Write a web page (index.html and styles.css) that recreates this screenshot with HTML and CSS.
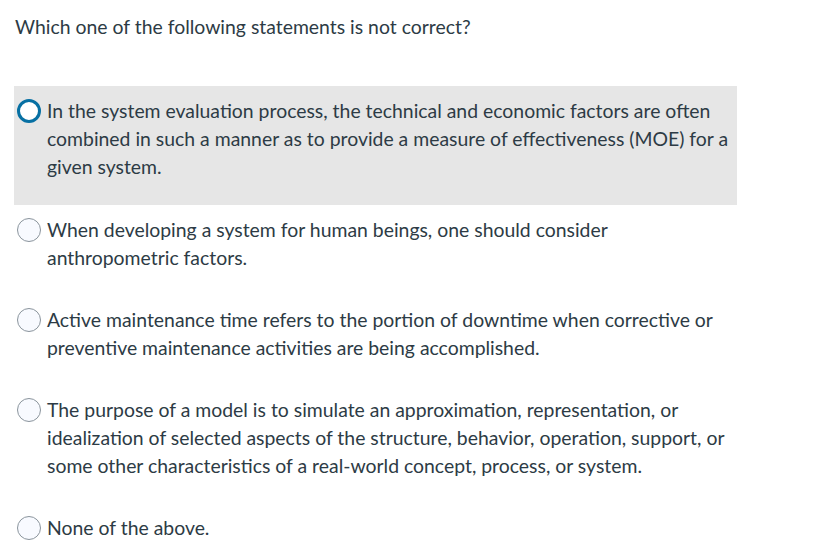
FILE: index.html
```html
<!DOCTYPE html>
<html>
<head>
<meta charset="utf-8">
<link rel="stylesheet" href="styles.css">
</head>
<body>
<div class="question">
  <p class="prompt">Which one of the following statements is not correct?</p>
  <div class="answers">
    <label class="answer selected">
      <span class="radio"></span>
      <span class="text">In the system evaluation process, the technical and economic factors are often combined in such a manner as to provide a measure of effectiveness (MOE) for a given system.</span>
    </label>
    <label class="answer">
      <span class="radio"></span>
      <span class="text">When developing a system for human beings, one should consider anthropometric factors.</span>
    </label>
    <label class="answer">
      <span class="radio"></span>
      <span class="text">Active maintenance time refers to the portion of downtime when corrective or preventive maintenance activities are being accomplished.</span>
    </label>
    <label class="answer">
      <span class="radio"></span>
      <span class="text">The purpose of a model is to simulate an approximation, representation, or idealization of selected aspects of the structure, behavior, operation, support, or some other characteristics of a real-world concept, process, or system.</span>
    </label>
    <label class="answer">
      <span class="radio"></span>
      <span class="text">None of the above.</span>
    </label>
  </div>
</div>
</body>
</html>
```

FILE: styles.css
```css
html, body {
  margin: 0;
  padding: 0;
  background: #ffffff;
}
body {
  font-family: Lato, "Open Sans", sans-serif;
  font-size: 19.4px;
  line-height: 28px;
  color: #2d3b45;
}
.question {
  padding: 13px 0 0 15px;
  width: 722px;
}
.prompt {
  margin: 0 0 45px 0;
}
.answers {
  display: flex;
  flex-direction: column;
  margin-left: -1px;
}
.answer {
  display: flex;
  align-items: flex-start;
  gap: 6px;
  padding: 11px 2px 23px 3px;
}
.answer.selected {
  background: #e6e6e6;
}
.radio {
  flex: none;
  box-sizing: border-box;
  width: 24px;
  height: 24px;
  margin-top: 2px;
  border-radius: 50%;
  border: 1px solid #8a949c;
  background: #f8faff;
}
.answer.selected .radio {
  border: 3px solid #0770a3;
  background: #ffffff;
}
.answer.selected {
  padding-bottom: 24px;
}
.text {
  flex: 1;
}
```
